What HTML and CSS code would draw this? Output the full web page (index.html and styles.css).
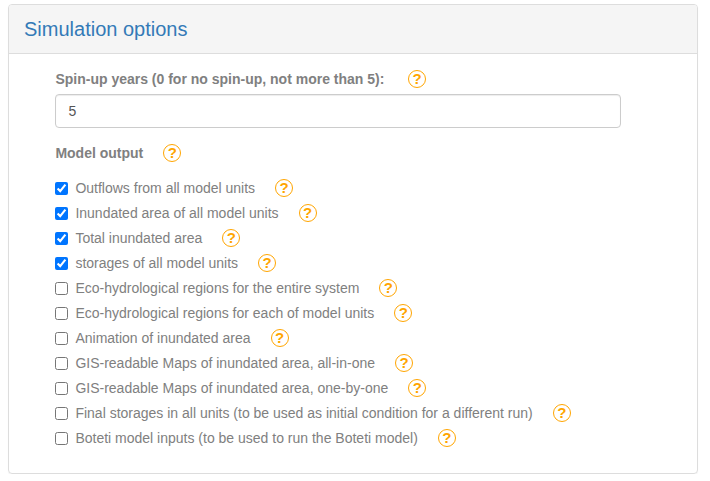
FILE: index.html
```html
<!DOCTYPE html>
<html lang="en">
<head>
<meta charset="utf-8">
<title>Simulation options</title>
<link rel="stylesheet" href="styles.css">
</head>
<body>
<section class="panel">
  <header class="panel-heading"><h4 class="panel-title">Simulation options</h4></header>
  <div class="panel-body">
    <div class="field-label"><label for="spinup">Spin-up years (0 for no spin-up, not more than 5):</label><span class="help help-wide">?</span></div>
    <input class="form-control" id="spinup" type="text" value="5">
    <div class="field-label output-label"><strong>Model output</strong><span class="help">?</span></div>
    <div class="options">
      <div class="option"><label><input type="checkbox" checked>Outflows from all model units</label><span class="help">?</span></div>
      <div class="option"><label><input type="checkbox" checked>Inundated area of all model units</label><span class="help">?</span></div>
      <div class="option"><label><input type="checkbox" checked>Total inundated area</label><span class="help">?</span></div>
      <div class="option"><label><input type="checkbox" checked>storages of all model units</label><span class="help">?</span></div>
      <div class="option"><label><input type="checkbox">Eco-hydrological regions for the entire system</label><span class="help">?</span></div>
      <div class="option"><label><input type="checkbox">Eco-hydrological regions for each of model units</label><span class="help">?</span></div>
      <div class="option"><label><input type="checkbox">Animation of inundated area</label><span class="help">?</span></div>
      <div class="option"><label><input type="checkbox">GIS-readable Maps of inundated area, all-in-one</label><span class="help">?</span></div>
      <div class="option"><label><input type="checkbox">GIS-readable Maps of inundated area, one-by-one</label><span class="help">?</span></div>
      <div class="option"><label><input type="checkbox">Final storages in all units (to be used as initial condition for a different run)</label><span class="help">?</span></div>
      <div class="option"><label><input type="checkbox">Boteti model inputs (to be used to run the Boteti model)</label><span class="help">?</span></div>
    </div>
  </div>
</section>
</body>
</html>
```

FILE: styles.css
```css
* {
  box-sizing: border-box;
}

body {
  margin: 0;
  padding: 4px 12px 0 8px;
  background: #fff;
  color: #808080;
  font: 14px/20px "Liberation Sans", Arial, sans-serif;
}

.panel {
  height: 470px;
  border: 1px solid #ddd;
  border-radius: 4px;
  box-shadow: 0 1px 1px rgba(0, 0, 0, 0.05);
}

.panel-heading {
  height: 49px;
  padding: 12px 15px;
  border-bottom: 1px solid #ddd;
  border-radius: 3px 3px 0 0;
  background: #f5f5f5;
}

.panel-title {
  margin: 0;
  color: #337ab7;
  font-size: 20px;
  font-weight: 400;
  line-height: 24px;
}

.panel-body {
  padding: 15px 75px 0 46.4px;
}

.field-label {
  display: flex;
  align-items: center;
  height: 20px;
  font-weight: 700;
}

.form-control {
  display: block;
  width: 566px;
  height: 34px;
  margin: 5px 0 0;
  padding: 6px 12px;
  border: 1px solid #ccc;
  border-radius: 4px;
  box-shadow: inset 0 1px 1px rgba(0, 0, 0, 0.075);
  color: #555;
  font: inherit;
}

.output-label {
  margin-top: 15px;
}

.options {
  margin-top: 15px;
}

.option {
  display: flex;
  align-items: center;
  height: 20px;
  margin-bottom: 5px;
}

.option label {
  display: flex;
  align-items: center;
}

.option input {
  width: 13px;
  height: 13px;
  margin: 1px 7px 0 0;
}

.help {
  width: 18px;
  height: 18px;
  margin-left: 20px;
  border: 1px solid orange;
  border-radius: 50%;
  color: orange;
  font-size: 15px;
  font-weight: 700;
  line-height: 16px;
  text-align: center;
}

.help-wide {
  margin-left: 23.8px;
}
```
